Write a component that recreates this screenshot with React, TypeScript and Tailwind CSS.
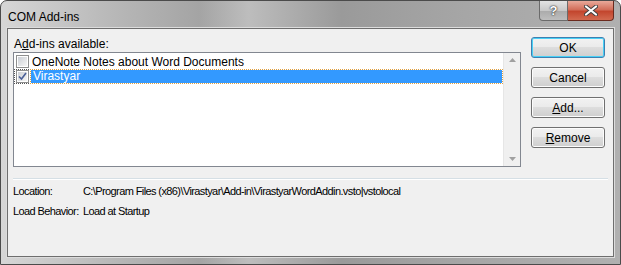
import { FC, ReactNode } from "react";

const font = { fontFamily: '"Liberation Sans", Arial, sans-serif' };

const Btn: FC<{ children: ReactNode; primary?: boolean }> = ({ children, primary }) => (
  <div
    className={
      "h-[21px] w-[74px] rounded-[3px] border flex items-center justify-center text-[12px] text-black bg-[linear-gradient(to_bottom,#f2f2f2_0%,#ebebeb_45%,#dddddd_50%,#cfcfcf_100%)] " +
      (primary ? "border-[#3c7fb1] shadow-[inset_0_0_0_1px_#48d0f6]" : "border-[#707070] shadow-[inset_0_0_0_1px_#fcfcfc]")
    }
  >
    {children}
  </div>
);

const Check: FC<{ checked?: boolean }> = ({ checked }) => (
  <div className="w-[13px] h-[13px] shrink-0 border border-[#8e8f8f] bg-white flex items-center justify-center">
    <div className="w-[9px] h-[9px] bg-[linear-gradient(135deg,#cbcfd5,#f6f6f6)] flex items-center justify-center">
      {checked && (
        <svg width="9" height="9" viewBox="0 0 9 9">
          <path d="M1 4.5 L3.5 7 L8 1" fill="none" stroke="#4a5f97" strokeWidth="1.6" />
        </svg>
      )}
    </div>
  </div>
);

export default function App() {
  return (
    <div className="w-[621px] h-[265px] bg-white" style={font}>
      <div className="w-[621px] h-[265px] rounded-t-[7px] border border-[#4b4b4b] bg-[linear-gradient(to_right,#d6d6d6_0%,#b8b8b8_18%,#a4a4a4_32%,#bdbdbd_40%,#9a9a9a_55%,#a6a6a6_75%,#b0b0b0_100%)] flex flex-col px-[6px] pb-[7px]">
        <div className="h-[27px] flex items-start justify-between shrink-0">
          <div className="pl-[1px] pt-[9px] text-[12px] leading-[14px] text-black">COM Add-ins</div>
          <div className="flex">
            <div className="w-[29px] h-[20px] rounded-bl-[4px] border border-[#6b6b6b] border-t-0 bg-[linear-gradient(to_bottom,#e3e3e3,#c8c8c8_50%,#acacac_55%,#bebebe)] flex items-center justify-center text-white font-bold text-[13px] [text-shadow:0_0_1px_#222,0_0_2px_#222]">
              ?
            </div>
            <div className="w-[46px] h-[20px] rounded-br-[4px] border border-[#6b2a1e] border-t-0 border-l-0 bg-[linear-gradient(to_bottom,#e9a99a,#d26e5a_45%,#c3462e_55%,#d26a50)] flex items-center justify-center">
              <svg width="14" height="11" viewBox="0 0 14 11">
                <path d="M2 1.5 L12 9.5 M12 1.5 L2 9.5" stroke="#404040" strokeWidth="4" strokeLinecap="round" />
                <path d="M2 1.5 L12 9.5 M12 1.5 L2 9.5" stroke="#ffffff" strokeWidth="2.2" strokeLinecap="round" />
              </svg>
            </div>
          </div>
        </div>
        <div className="flex-1 border border-[#6e6e6e] shadow-[0_0_0_1px_#dcdcdc] bg-[#f0f0f0] flex flex-col px-[5px] text-[12px] text-black">
          <div className="flex gap-[10px] pt-[7px]">
            <div className="w-[508px] flex flex-col">
              <div className="h-[16px] leading-[16px] pl-[1px]">
                A<span className="underline">d</span>d-ins available:
              </div>
              <div className="h-[115px] border border-[#828790] bg-white flex">
                <div className="flex-1 flex flex-col pt-[1px]">
                  <div className="h-[15px] flex items-center pl-[2px]">
                    <Check />
                    <span className="ml-[3px] leading-[14px]">OneNote Notes about Word Documents</span>
                  </div>
                  <div className="h-[15px] flex items-center pl-[1px] border border-dotted border-[#555]">
                    <Check checked />
                    <span className="ml-[2px] flex-1 h-[13px] leading-[13px] bg-[#3399ff] text-white pl-[2px] outline outline-1 outline-dotted outline-[#e0a040]">
                      Virastyar
                    </span>
                  </div>
                </div>
                <div className="w-[17px] bg-[#f0f0f0] border-l border-[#e6e6e6] flex flex-col justify-between items-center py-[5px]">
                  <svg width="7" height="4" viewBox="0 0 7 4">
                    <path d="M0 4 L3.5 0 L7 4 Z" fill="#a0a0a0" />
                  </svg>
                  <svg width="7" height="4" viewBox="0 0 7 4">
                    <path d="M0 0 L7 0 L3.5 4 Z" fill="#a0a0a0" />
                  </svg>
                </div>
              </div>
            </div>
            <div className="flex flex-col gap-[9px] pt-[1px]">
              <Btn primary>OK</Btn>
              <Btn>Cancel</Btn>
              <Btn>
                <span className="underline">A</span>dd...
              </Btn>
              <Btn>
                <span className="underline">R</span>emove
              </Btn>
            </div>
          </div>
          <div className="mt-[11px] h-[2px] border-t border-[#d5dfe5] border-b border-b-white" />
          <div className="flex flex-col gap-[5px] pt-[4px] text-[11px] tracking-[-0.6px] whitespace-nowrap">
            <div className="flex h-[15px] leading-[15px]">
              <span className="w-[70px]">Location:</span>
              <span>C:\Program Files (x86)\Virastyar\Add-in\VirastyarWordAddin.vsto|vstolocal</span>
            </div>
            <div className="flex h-[15px] leading-[15px]">
              <span className="w-[70px]">Load Behavior:</span>
              <span>Load at Startup</span>
            </div>
          </div>
        </div>
      </div>
    </div>
  );
}
